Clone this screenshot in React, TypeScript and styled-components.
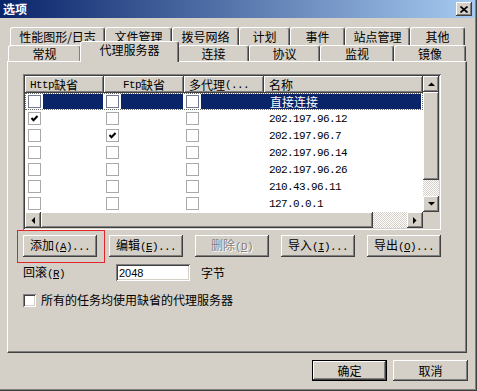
import styled, { createGlobalStyle, css } from "styled-components"

const face = "#d4d0c8"
const shadow = "#808080"
const dark = "#404040"
const navy = "#0a246a"

const GlobalStyle = createGlobalStyle`
  html, body { margin: 0; padding: 0; background: ${face}; }
  body {
    font-family: "Noto Sans CJK SC", "Noto Sans", sans-serif;
    font-size: 12px;
    line-height: 14px;
    color: #000;
  }
`

const raised = css`
  box-shadow: inset -1px -1px ${dark}, inset 1px 1px #fff, inset -2px -2px ${shadow}, inset 2px 2px ${face};
`

const sunken = css`
  box-shadow: inset 1px 1px ${shadow}, inset -1px -1px #fff, inset 2px 2px ${dark}, inset -2px -2px ${face};
`

const Window = styled.div`
  width: 477px;
  height: 391px;
  box-sizing: border-box;
  display: flex;
  flex-direction: column;
  background: ${face};
  box-shadow: inset -1px -1px ${dark}, inset -2px -2px ${shadow};
  overflow: hidden;
`

const TitleBar = styled.div`
  flex: none;
  height: 18px;
  margin-right: 2px;
  padding: 0 3px;
  display: flex;
  align-items: center;
  justify-content: space-between;
  background: linear-gradient(to right, ${navy}, #a6caf0);
  color: #fff;
  font-weight: bold;
`

const CloseButton = styled.div`
  width: 16px;
  height: 14px;
  display: flex;
  align-items: center;
  justify-content: center;
  background: ${face};
  ${raised};
`

const Body = styled.div`
  flex: 1;
  display: flex;
  flex-direction: column;
  padding: 9px 10px 0 7px;
`

const TabRow = styled.div<{ $indent: number }>`
  display: flex;
  align-items: flex-end;
  margin-left: ${p => p.$indent}px;
`

const Tab = styled.div<{ $w: number; $h: number; $active?: boolean }>`
  box-sizing: border-box;
  width: ${p => p.$w}px;
  height: ${p => p.$h}px;
  display: flex;
  align-items: center;
  justify-content: center;
  white-space: nowrap;
  line-height: 12px;
  background: ${face};
  border-top: 1px solid #fff;
  border-left: 1px solid #fff;
  border-right: 1px solid ${dark};
  border-radius: 3px 3px 0 0;
  box-shadow: inset -1px 0 ${shadow};
  ${p =>
    p.$active &&
    css`
      position: relative;
      z-index: 1;
      width: ${p.$w + 2}px;
      height: 21px;
      margin: -4px -1px -1px;
      padding-bottom: 4px;
    `}
`

const Panel = styled.div`
  box-sizing: border-box;
  height: 292px;
  display: flex;
  flex-direction: column;
  padding: 12px 0 0 15px;
  border-top: 1px solid #fff;
  border-left: 1px solid #fff;
  border-right: 1px solid ${dark};
  border-bottom: 1px solid ${dark};
  box-shadow: inset -1px -1px ${shadow};
`

const ListBox = styled.div`
  box-sizing: border-box;
  width: 418px;
  height: 156px;
  padding: 2px;
  background: #fff;
  ${sunken};
  display: grid;
  grid-template-columns: 1fr 16px;
  grid-template-rows: 17px 119px 16px;
`

const cols = "79px 80px 80px 1fr"

const Header = styled.div`
  display: grid;
  grid-template-columns: ${cols};
`

const HeaderCell = styled.div<{ $center?: boolean }>`
  background: ${face};
  ${raised};
  display: flex;
  align-items: center;
  justify-content: ${p => (p.$center ? "center" : "flex-start")};
  padding-left: ${p => (p.$center ? 0 : 5)}px;
  white-space: nowrap;
  overflow: hidden;
`

const Rows = styled.div`
  grid-column: 1;
  grid-row: 2;
  background: #fff;
  display: flex;
  flex-direction: column;
`

const Row = styled.div<{ $focus?: boolean }>`
  height: 17px;
  display: grid;
  grid-template-columns: ${cols};
  ${p =>
    p.$focus &&
    css`
      outline: 1px dotted #6a6a6a;
      outline-offset: -1px;
    `}
`

const Cell = styled.div<{ $pad: number }>`
  display: flex;
  align-items: center;
  padding-left: ${p => p.$pad}px;
  white-space: nowrap;
`

const Fill = styled.div<{ $ml: number; $mr: number }>`
  align-self: stretch;
  flex: 1;
  margin: 1px ${p => p.$mr}px 1px ${p => p.$ml}px;
  background: ${navy};
  color: #fff;
  display: flex;
  align-items: center;
  padding-left: ${p => (p.$ml === 0 ? 6 : 0)}px;
`

const FlatBox = styled.span<{ $focus?: boolean }>`
  box-sizing: border-box;
  flex: none;
  width: 13px;
  height: 13px;
  background: #fff;
  border: 1px solid ${p => (p.$focus ? "#6f7a8e" : "#a9a9a9")};
  display: flex;
  align-items: center;
  justify-content: center;
`

const VScroll = styled.div`
  grid-column: 2;
  grid-row: 1 / span 2;
  display: flex;
  flex-direction: column;
`

const HScroll = styled.div`
  grid-column: 1;
  grid-row: 3;
  display: flex;
`

const ArrowButton = styled.div`
  flex: none;
  width: 16px;
  height: 16px;
  background: ${face};
  ${raised};
  display: flex;
  align-items: center;
  justify-content: center;
`

const Thumb = styled.div<{ $size: number; $vertical?: boolean }>`
  flex: none;
  ${p => (p.$vertical ? `height: ${p.$size}px;` : `width: ${p.$size}px;`)}
  background: ${face};
  ${raised};
`

const Track = styled.div`
  flex: 1;
  background: repeating-conic-gradient(${face} 0 25%, #fff 0 50%) 0 0 / 2px 2px;
`

const Corner = styled.div`
  grid-column: 2;
  grid-row: 3;
  background: ${face};
`

const Latin = styled.span`
  font-family: "Liberation Mono", monospace;
  font-size: 11px;
  letter-spacing: -0.6px;
`

const Key = styled.span`
  text-decoration: underline;
`

const ButtonRow = styled.div`
  display: flex;
  gap: 12px;
  margin-top: 5px;
`

const PushButton = styled.button<{ $w?: number; $h?: number; $default?: boolean }>`
  box-sizing: border-box;
  width: ${p => p.$w ?? 74}px;
  height: ${p => p.$h ?? 22}px;
  padding: 0;
  border: none;
  background: ${face};
  color: #000;
  font: inherit;
  display: inline-flex;
  align-items: center;
  justify-content: center;
  white-space: nowrap;
  ${raised};
  ${p =>
    p.disabled &&
    css`
      color: ${shadow};
      text-shadow: 1px 1px #fff;
    `}
  ${p =>
    p.$default &&
    css`
      box-shadow: inset 0 0 0 1px #000, inset -2px -2px ${dark}, inset 2px 2px #fff,
        inset -3px -3px ${shadow}, inset 3px 3px ${face};
    `}
`

const Marked = styled.div`
  position: relative;
  display: flex;
`

const Marker = styled.div`
  position: absolute;
  inset: -5px -8px -6px -6px;
  border: 1px solid #e2252b;
  pointer-events: none;
`

const FieldRow = styled.div`
  display: flex;
  align-items: center;
  margin-top: 7px;
  height: 17px;
`

const FieldLabel = styled.span`
  width: 93px;
`

const NumberField = styled.input`
  box-sizing: border-box;
  width: 74px;
  height: 17px;
  border: none;
  padding: 0 3px;
  background: #fff;
  font-family: "Liberation Sans", Arial, sans-serif;
  font-size: 11px;
  color: #000;
  outline: none;
  ${sunken};
`

const Unit = styled.span`
  margin-left: 11px;
`

const CheckRow = styled.label`
  display: flex;
  align-items: center;
  gap: 5px;
  margin-top: 12px;
`

const SunkenBox = styled.span`
  width: 13px;
  height: 13px;
  background: #fff;
  ${sunken};
`

const Footer = styled.div`
  display: flex;
  justify-content: flex-end;
  gap: 6px;
  margin: 7px -1px 0 0;
`

function Check() {
  return (
    <svg width="9" height="9" viewBox="0 0 9 9">
      <polyline points="1.5,4 3.5,6.2 7.5,2" fill="none" stroke="#000" strokeWidth="2" />
    </svg>
  )
}

function Arrow({ dir }: { dir: "up" | "down" | "left" | "right" }) {
  const pts = {
    up: "0,4 7,4 3.5,0.5",
    down: "0,0 7,0 3.5,3.5",
    left: "4,0 4,7 0.5,3.5",
    right: "0,0 0,7 3.5,3.5",
  }[dir]
  const vertical = dir === "up" || dir === "down"
  return (
    <svg width={vertical ? 7 : 4} height={vertical ? 4 : 7} viewBox={vertical ? "0 0 7 4" : "0 0 4 7"}>
      <polygon points={pts} fill="#000" />
    </svg>
  )
}

function Hot({ text, k, tail = "" }: { text: string; k: string; tail?: string }) {
  return (
    <span>
      {text}
      <Latin>
        (<Key>{k}</Key>){tail}
      </Latin>
    </span>
  )
}

const topTabs = [
  { label: "性能图形/日志", w: 95 },
  { label: "文件管理", w: 67 },
  { label: "拨号网络", w: 67 },
  { label: "计划", w: 51 },
  { label: "事件", w: 55 },
  { label: "站点管理", w: 65 },
  { label: "其他", w: 55 },
]

const bottomTabs = [
  { label: "常规", w: 73 },
  { label: "代理服务器", w: 97, active: true },
  { label: "连接", w: 71 },
  { label: "协议", w: 71 },
  { label: "监视", w: 74 },
  { label: "镜像", w: 72 },
]

const proxies = [
  { name: "直接连接", http: false, ftp: false },
  { name: "202.197.96.12", http: true, ftp: false },
  { name: "202.197.96.7", http: false, ftp: true },
  { name: "202.197.96.14", http: false, ftp: false },
  { name: "202.197.96.26", http: false, ftp: false },
  { name: "210.43.96.11", http: false, ftp: false },
  { name: "127.0.0.1", http: false, ftp: false },
]

export default function App() {
  return (
    <>
      <GlobalStyle />
      <Window>
        <TitleBar>
          <span>选项</span>
          <CloseButton>
            <svg width="8" height="7" viewBox="0 0 8 7">
              <path d="M0.5 0.5 L7.5 6.5 M7.5 0.5 L0.5 6.5" stroke="#000" strokeWidth="1.6" />
            </svg>
          </CloseButton>
        </TitleBar>
        <Body>
          <TabRow $indent={3}>
            {topTabs.map(t => (
              <Tab key={t.label} $w={t.w} $h={18}>
                {t.label}
              </Tab>
            ))}
          </TabRow>
          <TabRow $indent={1}>
            {bottomTabs.map(t => (
              <Tab key={t.label} $w={t.w} $h={16} $active={t.active}>
                {t.label}
              </Tab>
            ))}
          </TabRow>
          <Panel>
            <ListBox>
              <Header>
                <HeaderCell>
                  <Latin>Http</Latin>缺省
                </HeaderCell>
                <HeaderCell $center>
                  <Latin>Ftp</Latin>缺省
                </HeaderCell>
                <HeaderCell>
                  多代理<Latin>(...</Latin>
                </HeaderCell>
                <HeaderCell>名称</HeaderCell>
              </Header>
              <Rows>
                {proxies.map((p, i) => {
                  const focus = i === 0
                  return (
                    <Row key={p.name} $focus={focus}>
                      <Cell $pad={3}>
                        <FlatBox $focus={focus}>{p.http && <Check />}</FlatBox>
                        {focus && <Fill $ml={2} $mr={1} />}
                      </Cell>
                      <Cell $pad={2}>
                        <FlatBox $focus={focus}>{p.ftp && <Check />}</FlatBox>
                        {focus && <Fill $ml={2} $mr={1} />}
                      </Cell>
                      <Cell $pad={2}>
                        <FlatBox $focus={focus} />
                        {focus && <Fill $ml={2} $mr={0} />}
                      </Cell>
                      {focus ? (
                        <Cell $pad={0}>
                          <Fill $ml={0} $mr={2}>
                            {p.name}
                          </Fill>
                        </Cell>
                      ) : (
                        <Cell $pad={5}>
                          <Latin>{p.name}</Latin>
                        </Cell>
                      )}
                    </Row>
                  )
                })}
              </Rows>
              <VScroll>
                <ArrowButton>
                  <Arrow dir="up" />
                </ArrowButton>
                <Thumb $vertical $size={88} />
                <Track />
                <ArrowButton>
                  <Arrow dir="down" />
                </ArrowButton>
              </VScroll>
              <HScroll>
                <ArrowButton>
                  <Arrow dir="left" />
                </ArrowButton>
                <Thumb $size={332} />
                <Track />
                <ArrowButton>
                  <Arrow dir="right" />
                </ArrowButton>
              </HScroll>
              <Corner />
            </ListBox>

            <ButtonRow>
              <Marked>
                <PushButton>
                  <Hot text="添加" k="A" tail="..." />
                </PushButton>
                <Marker />
              </Marked>
              <PushButton>
                <Hot text="编辑" k="E" tail="..." />
              </PushButton>
              <PushButton disabled>
                <Hot text="删除" k="D" />
              </PushButton>
              <PushButton>
                <Hot text="导入" k="I" tail="..." />
              </PushButton>
              <PushButton>
                <Hot text="导出" k="O" tail="..." />
              </PushButton>
            </ButtonRow>

            <FieldRow>
              <FieldLabel>
                <Hot text="回滚" k="R" />
              </FieldLabel>
              <NumberField readOnly value="2048" />
              <Unit>字节</Unit>
            </FieldRow>

            <CheckRow>
              <SunkenBox />
              <span>所有的任务均使用缺省的代理服务器</span>
            </CheckRow>
          </Panel>
          <Footer>
            <PushButton $w={75} $h={21} $default>
              确定
            </PushButton>
            <PushButton $w={75} $h={21}>
              取消
            </PushButton>
          </Footer>
        </Body>
      </Window>
    </>
  )
}
